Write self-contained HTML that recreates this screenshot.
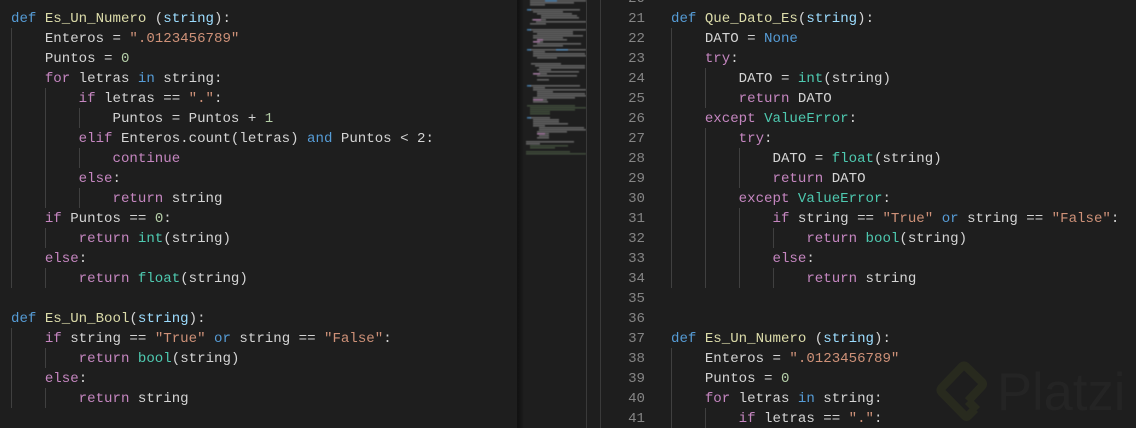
<!DOCTYPE html>
<html><head><meta charset="utf-8"><style>
html,body{margin:0;padding:0;width:1136px;height:428px;overflow:hidden;background:#1e1e1e}
#w{position:relative;width:1136px;height:428px;overflow:hidden;background:#1e1e1e}
pre{position:absolute;margin:0;font:14.1px/20px "Liberation Mono",monospace;color:#d4d4d4;white-space:pre}
.k{color:#569cd6}.f{color:#dcdcaa}.p{color:#9cdcfe}.s{color:#ce9178}.n{color:#b5cea8}.c{color:#c586c0}.b{color:#4ec9b0}
.g{position:absolute;width:1px;background:#404040}
#nums{color:#858585;text-align:right;width:40px;left:605px;top:-11px}
</style></head><body><div id="w">
<div style="position:absolute;left:517px;top:0;width:7px;height:428px;background:linear-gradient(90deg,#111 0,#141414 40%,#1e1e1e 100%)"></div>
<div style="position:absolute;left:586px;top:0;width:1px;height:428px;background:#3a3a3a"></div>
<div style="position:absolute;left:600px;top:0;width:1px;height:428px;background:#3a3a3a"></div>
<div class="g" style="left:11px;top:28px;height:260px"></div>
<div class="g" style="left:45px;top:88px;height:120px"></div>
<div class="g" style="left:79px;top:108px;height:20px"></div>
<div class="g" style="left:79px;top:148px;height:20px"></div>
<div class="g" style="left:79px;top:188px;height:20px"></div>
<div class="g" style="left:45px;top:228px;height:20px"></div>
<div class="g" style="left:45px;top:268px;height:20px"></div>
<div class="g" style="left:11px;top:328px;height:80px"></div>
<div class="g" style="left:45px;top:348px;height:20px"></div>
<div class="g" style="left:45px;top:388px;height:20px"></div>
<div class="g" style="left:671px;top:28px;height:260px"></div>
<div class="g" style="left:705px;top:68px;height:40px"></div>
<div class="g" style="left:705px;top:128px;height:160px"></div>
<div class="g" style="left:739px;top:148px;height:40px"></div>
<div class="g" style="left:739px;top:208px;height:80px"></div>
<div class="g" style="left:773px;top:228px;height:20px"></div>
<div class="g" style="left:773px;top:268px;height:20px"></div>
<div class="g" style="left:671px;top:348px;height:80px"></div>
<div class="g" style="left:705px;top:408px;height:20px"></div>
<pre style="left:11px;top:9px"><span class="k">def</span> <span class="f">Es_Un_Numero</span> (<span class="p">string</span>):
    Enteros = <span class="s">".0123456789"</span>
    Puntos = <span class="n">0</span>
    <span class="c">for</span> letras <span class="k">in</span> string:
        <span class="c">if</span> letras == <span class="s">"."</span>:
            Puntos = Puntos + <span class="n">1</span>
        <span class="c">elif</span> Enteros.count(letras) <span class="k">and</span> Puntos &lt; 2:
            <span class="c">continue</span>
        <span class="c">else</span>:
            <span class="c">return</span> string
    <span class="c">if</span> Puntos == <span class="n">0</span>:
        <span class="c">return</span> <span class="b">int</span>(string)
    <span class="c">else</span>:
        <span class="c">return</span> <span class="b">float</span>(string)

<span class="k">def</span> <span class="f">Es_Un_Bool</span>(<span class="p">string</span>):
    <span class="c">if</span> string == <span class="s">"True"</span> <span class="k">or</span> string == <span class="s">"False"</span>:
        <span class="c">return</span> <span class="b">bool</span>(string)
    <span class="c">else</span>:
        <span class="c">return</span> string</pre>
<pre id="nums">20
21
22
23
24
25
26
27
28
29
30
31
32
33
34
35
36
37
38
39
40
41</pre>
<pre style="left:671px;top:9px"><span class="k">def</span> <span class="f">Que_Dato_Es</span>(<span class="p">string</span>):
    DATO = <span class="k">None</span>
    <span class="c">try</span>:
        DATO = <span class="b">int</span>(string)
        <span class="c">return</span> DATO
    <span class="c">except</span> <span class="b">ValueError</span>:
        <span class="c">try</span>:
            DATO = <span class="b">float</span>(string)
            <span class="c">return</span> DATO
        <span class="c">except</span> <span class="b">ValueError</span>:
            <span class="c">if</span> string == <span class="s">"True"</span> <span class="k">or</span> string == <span class="s">"False"</span>:
                <span class="c">return</span> <span class="b">bool</span>(string)
            <span class="c">else</span>:
                <span class="c">return</span> string


<span class="k">def</span> <span class="f">Es_Un_Numero</span> (<span class="p">string</span>):
    Enteros = <span class="s">".0123456789"</span>
    Puntos = <span class="n">0</span>
    <span class="c">for</span> letras <span class="k">in</span> string:
        <span class="c">if</span> letras == <span class="s">"."</span>:</pre>
<svg style="position:absolute;left:0;top:0" width="1136" height="428">
<defs><filter id="bl" x="-5%" y="-5%" width="110%" height="110%"><feGaussianBlur stdDeviation="0.55"/></filter><clipPath id="mc"><rect x="520" y="0" width="66" height="160"/></clipPath></defs>
<g clip-path="url(#mc)"><g filter="url(#bl)">
<g fill="#8a8a8a" opacity=".62">
<rect x="530" y="0" width="56" height="1.6"/><rect x="530" y="2" width="44" height="1.6"/><rect x="530" y="4" width="15" height="1.6"/>
<rect x="530" y="9" width="50" height="1.6"/><rect x="533" y="11" width="30" height="1.6"/><rect x="537" y="13" width="35" height="1.6"/><rect x="541" y="15" width="36" height="1.6"/><rect x="541" y="17" width="38" height="1.6"/><rect x="532" y="19" width="14" height="1.6"/><rect x="536" y="21" width="50" height="1.6"/><rect x="530" y="23" width="16" height="1.6"/>
<rect x="530" y="29" width="56" height="1.6"/><rect x="533" y="31" width="40" height="1.6"/><rect x="537" y="33" width="36" height="1.6"/><rect x="533" y="35" width="50" height="1.6"/><rect x="533" y="37" width="30" height="1.6"/><rect x="537" y="39" width="30" height="1.6"/><rect x="533" y="41" width="10" height="1.6"/><rect x="537" y="43" width="44" height="1.6"/><rect x="533" y="45" width="30" height="1.6"/>
<rect x="530" y="49" width="56" height="1.6"/><rect x="533" y="51" width="12" height="1.6"/><rect x="533" y="53" width="52" height="1.6"/><rect x="533" y="55" width="53" height="1.6"/><rect x="537" y="57" width="20" height="1.6"/>
<rect x="531" y="63" width="30" height="1.6"/><rect x="535" y="65" width="50" height="1.6"/><rect x="539" y="67" width="46" height="1.6"/><rect x="537" y="69" width="14" height="1.6"/><rect x="539" y="71" width="40" height="1.6"/><rect x="533" y="73" width="14" height="1.6"/><rect x="537" y="75" width="40" height="1.6"/><rect x="537" y="79" width="12" height="1.6"/>
<rect x="530" y="85" width="50" height="1.6"/><rect x="533" y="87" width="12" height="1.6"/><rect x="533" y="89" width="53" height="1.6"/><rect x="537" y="91" width="16" height="1.6"/><rect x="537" y="93" width="48" height="1.6"/><rect x="537" y="95" width="49" height="1.6"/><rect x="533" y="97" width="42" height="1.6"/><rect x="533" y="99" width="14" height="1.6"/><rect x="533" y="101" width="15" height="1.6"/>
<rect x="530" y="117" width="20" height="1.6"/><rect x="533" y="119" width="26" height="1.6"/><rect x="533" y="121" width="26" height="1.6"/><rect x="533" y="123" width="35" height="1.6"/><rect x="533" y="125" width="12" height="1.6"/><rect x="539" y="127" width="45" height="1.6"/><rect x="539" y="129" width="47" height="1.6"/><rect x="537" y="131" width="30" height="1.6"/><rect x="537" y="133" width="12" height="1.6"/><rect x="539" y="135" width="10" height="1.6"/><rect x="537" y="137" width="12" height="1.6"/>
<rect x="526" y="141" width="48" height="1.6"/><rect x="526" y="143" width="14" height="1.6"/>
</g>
<g fill="#6a8560" opacity=".42">
<rect x="527" y="105" width="48" height="1.6"/><rect x="530" y="107" width="56" height="1.6"/><rect x="530" y="109" width="45" height="1.6"/><rect x="530" y="111" width="20" height="1.6"/><rect x="530" y="113" width="20" height="1.6"/>
<rect x="530" y="145" width="38" height="1.6"/><rect x="530" y="147" width="25" height="1.6"/><rect x="526" y="151" width="44" height="1.6"/><rect x="526" y="153" width="60" height="1.6"/>
</g>
<g fill="#569cd6" opacity=".7">
<rect x="527" y="9" width="4" height="1.6"/><rect x="527" y="29" width="4" height="1.6"/><rect x="527" y="49" width="4" height="1.6"/><rect x="527" y="85" width="4" height="1.6"/><rect x="527" y="117" width="4" height="1.6"/><rect x="545" y="0" width="12" height="1.6"/><rect x="556" y="49" width="12" height="1.6"/>
</g>
<g fill="#c586c0" opacity=".6">
<rect x="533" y="19" width="8" height="1.6"/><rect x="533" y="41" width="7" height="1.6"/><rect x="533" y="73" width="7" height="1.6"/><rect x="533" y="99" width="10" height="1.6"/><rect x="537" y="39" width="6" height="1.6"/><rect x="537" y="133" width="8" height="1.6"/>
</g>
</g></g>
<path d="M968 401L982 386Q983.500 384 982 382L966 366.500Q964 365 962 366.500L941.500 388Q940 390 941.500 392L965 416Q966.500 417.500 968 416L975 409M968 401L977 410" fill="none" stroke="#282a1e" stroke-width="8.500" stroke-linejoin="round"/>
<text x="997" y="410" font-family="Liberation Sans,sans-serif" font-size="52.500" fill="#242424">Platzi</text>
</svg>
</div></body></html>
